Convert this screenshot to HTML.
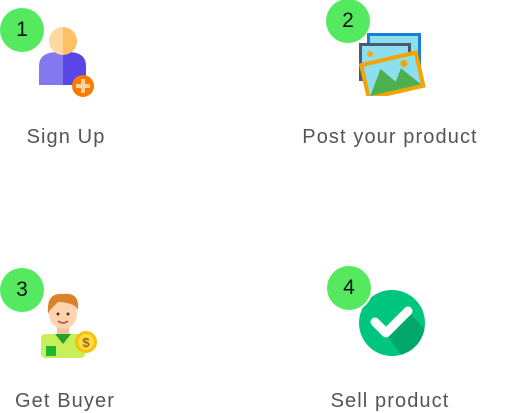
<!DOCTYPE html>
<html><head><style>
body{margin:0;width:509px;height:413px;background:#fff;position:relative;overflow:hidden;font-family:"Liberation Sans",sans-serif}
.n{position:absolute;width:44px;height:44px;border-radius:50%;background:#55e95f;color:#111;font-size:21px;text-align:center;line-height:44px;z-index:2}
.t{position:absolute;color:#555;font-size:20px;letter-spacing:1.1px;text-align:center;width:260px;white-space:nowrap}
svg{position:absolute}
</style></head><body>
<svg style="left:38px;top:26px" width="60" height="74" viewBox="0 0 60 74">
<path d="M1 59 V40 Q1 26 20 26 H25 V59Z" fill="#8378ee"/>
<path d="M25 26 H30 Q48 26 48 40 V59 H25Z" fill="#5b45e6"/>
<path d="M25 1 A14 14 0 0 0 25 29Z" fill="#ffd9a0"/>
<path d="M25 1 A14 14 0 0 1 25 29Z" fill="#ffc066"/>
<circle cx="45" cy="60" r="11" fill="#ff7a00"/>
<path d="M43 53h4v5h5v4h-5v5h-4v-5h-5v-4h5z" fill="#ffd39a"/>
</svg>
<svg style="left:358px;top:30px" width="68" height="66" viewBox="0 0 68 66">
<rect x="9" y="3" width="54" height="40" fill="#1a7fd6"/><rect x="12" y="6" width="48" height="34" fill="#8ce0ee"/>
<rect x="1" y="13" width="52" height="38" fill="#4a5a75"/><rect x="4" y="16" width="46" height="32" fill="#8ce0ee"/>
<circle cx="12" cy="24" r="3" fill="#f5a623"/>
<g transform="rotate(-13 36 44)"><rect x="4" y="26" width="60" height="38" fill="#f5a300"/><rect x="8" y="30" width="52" height="30" fill="#8ce0ee"/>
<path d="M8 60 L24 36 L36 52 L44 40 L60 60Z" fill="#4caf50"/><circle cx="48" cy="36" r="3.5" fill="#f5a300"/></g>
</svg>
<svg style="left:38px;top:290px" width="62" height="68" viewBox="0 0 62 68">
<rect x="3" y="44" width="44" height="24" rx="4" fill="#c6ef5a"/>
<path d="M17 44 L25 54 L33 44 Z" fill="#2aa02a"/><rect x="8" y="56" width="10" height="10" fill="#1fb82c"/>
<rect x="19" y="34" width="12" height="10" fill="#f5c09a"/>
<ellipse cx="25" cy="24" rx="14" ry="15" fill="#ffd3ad"/>
<path d="M10 24 Q8 2 25 4 Q42 2 40 20 L37 16 Q30 12 20 12 L12 20Z" fill="#d9822b"/>
<circle cx="20" cy="24" r="1.5" fill="#533"/><circle cx="30" cy="24" r="1.5" fill="#533"/>
<path d="M20 31 Q25 35 30 31" stroke="#a55" stroke-width="1.5" fill="none"/>
<circle cx="48" cy="52" r="11" fill="#f5c400"/><circle cx="48" cy="52" r="8" fill="#ffd94a"/>
<text x="48" y="57" font-size="13" font-weight="bold" text-anchor="middle" fill="#a06a00" font-family="Liberation Sans">$</text>
</svg>
<svg style="left:357px;top:288px" width="70" height="70" viewBox="0 0 70 70">
<defs><clipPath id="c"><circle cx="35" cy="35" r="33"/></clipPath></defs>
<circle cx="35" cy="35" r="33" fill="#00c57e"/>
<path clip-path="url(#c)" d="M29 46 L51 24 L75 48 L50 75Z" fill="#00a86b"/>
<path d="M18 34 L29 45 L51 23" stroke="#fff" stroke-width="9" stroke-linecap="round" stroke-linejoin="round" fill="none"/>
</svg>
<div class="n" style="left:0;top:8px">1</div>
<div class="n" style="left:326px;top:-1px">2</div>
<div class="n" style="left:0;top:268px">3</div>
<div class="n" style="left:327px;top:266px;box-shadow:0 0 0 2px #fff">4</div>
<div class="t" style="left:-64px;top:126px">Sign Up</div>
<div class="t" style="left:260px;top:126px">Post your product</div>
<div class="t" style="left:-65px;top:390px">Get Buyer</div>
<div class="t" style="left:260px;top:390px">Sell product</div>
</body></html>
